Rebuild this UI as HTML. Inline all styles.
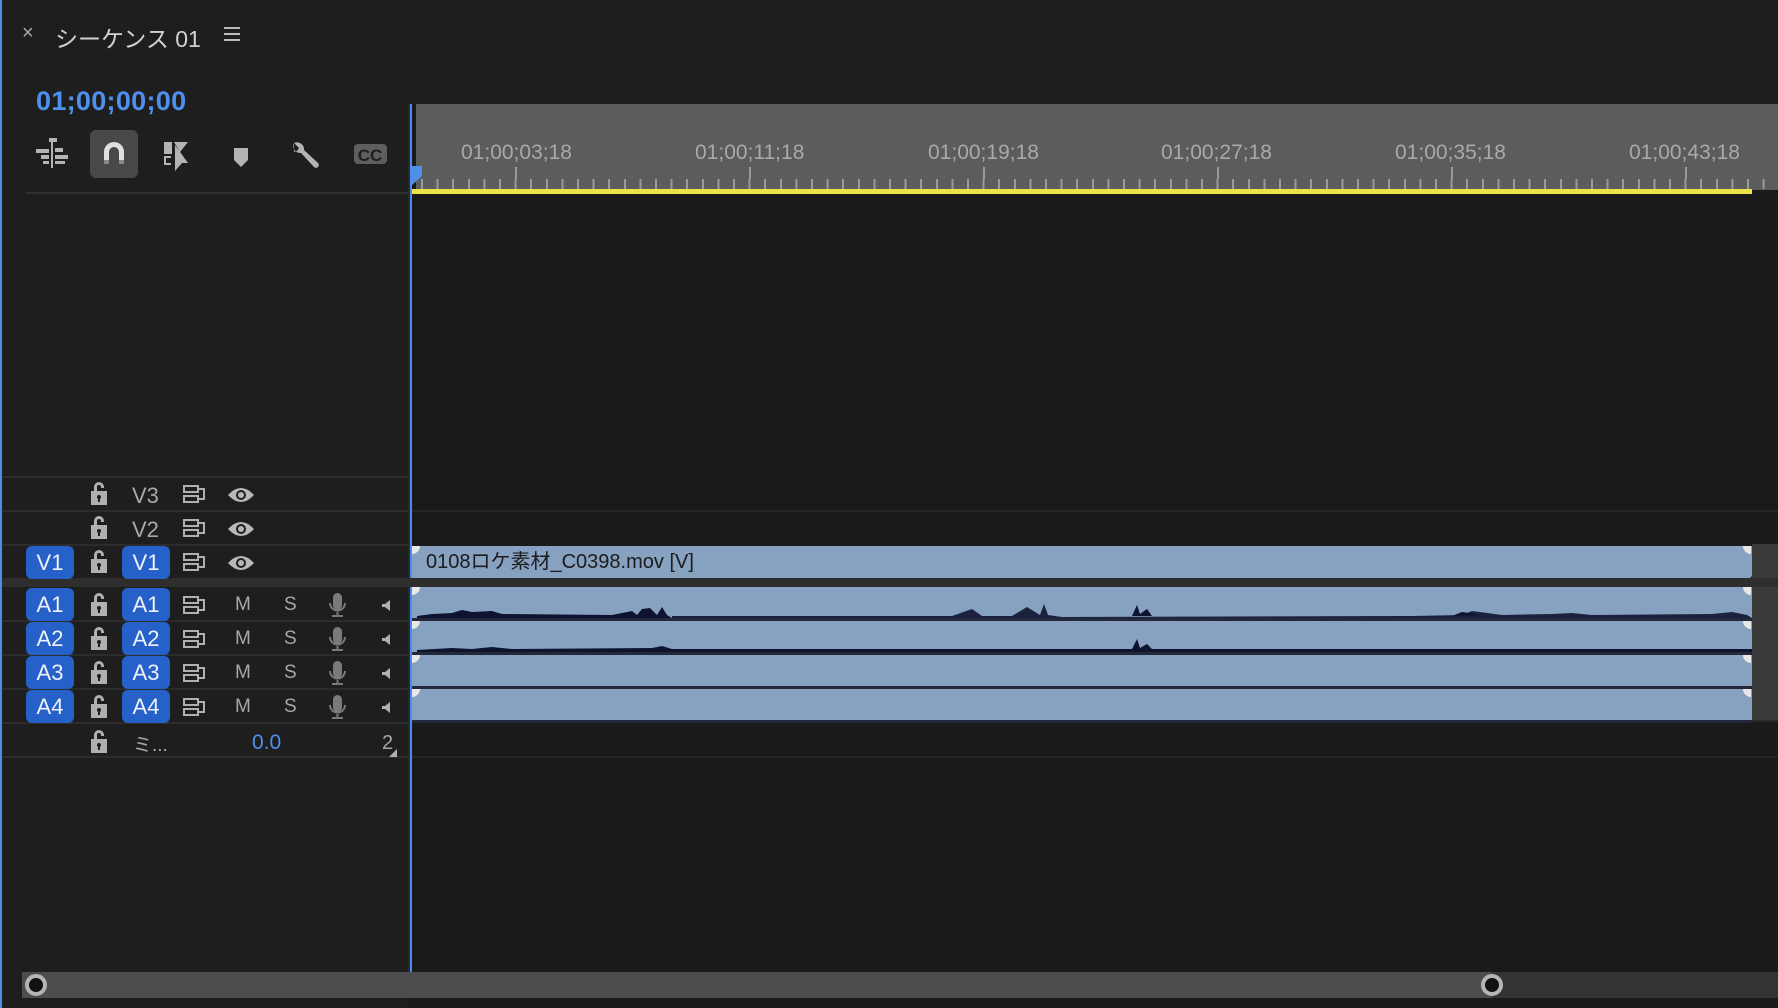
<!DOCTYPE html>
<html><head><meta charset="utf-8"><style>
*{margin:0;padding:0;box-sizing:border-box}
body{width:1778px;height:1008px;background:#1e1e1e;position:relative;overflow:hidden;font-family:"Liberation Sans","Noto Sans CJK JP",sans-serif}
.a{position:absolute}
.row{position:absolute;left:2px;width:406px;border-top:2px solid #2c2c2c}
.badge{position:absolute;width:48px;height:33px;background:#2561c9;border-radius:6px;color:#eef2fa;font-size:22px;text-align:center;line-height:33px}
.lbl{position:absolute;color:#a8a8a8;font-size:22px}
.rl{position:absolute;top:141px;color:#a9a9a9;font-size:21px}
.clip{position:absolute;left:412px;width:1340px;background:#87a1c1;border-bottom:3px solid #23283a;border-radius:0 0 3px 0}
</style></head><body>
<div class="a" style="left:0;top:0;width:2px;height:1008px;background:#4a8df0"></div>
<!-- header -->
<div class="a" style="left:22px;top:22px;color:#aaa;font-size:20px">×</div>
<div class="a" style="left:55px;top:20px;color:#d2d2d2;font-size:23px">シーケンス 01</div>
<div class="a" style="left:224px;top:27px;width:16px;height:2px;background:#bbb;box-shadow:0 6px 0 #bbb,0 12px 0 #bbb"></div>
<div class="a" style="left:36px;top:86px;color:#4e90ec;font-size:27px;font-weight:bold;letter-spacing:0.3px">01;00;00;00</div>
<!-- toolbar -->
<div class="a" style="left:90px;top:130px;width:48px;height:48px;background:#484848;border-radius:6px"></div>
<svg class="a" style="left:0;top:125px" width="410" height="60" fill="#b4b4b4">
<rect x="49" y="13" width="8" height="4"/><rect x="51" y="15" width="2" height="28"/>
<rect x="36" y="24" width="13" height="4"/><rect x="41" y="30" width="8" height="4"/><rect x="55" y="23" width="8" height="4"/><rect x="55" y="30" width="13" height="4"/><rect x="43" y="36" width="6" height="3"/><rect x="55" y="36" width="10" height="3"/>
<path d="M104 38 V27 a10 10 0 0 1 20 0 V38 h-5 V27 a5 5 0 0 0 -10 0 V38z" fill="#e0e0e0"/>
<rect x="104" y="35" width="5" height="4" fill="#888"/><rect x="119" y="35" width="5" height="4" fill="#888"/>
<path d="M164 17 h8 v12 h-8z M174 17 h14 l-8 10 z M175 20 l13 18 h-6 l-7 8z M164 31 h7 v2 h-5 v5 h5 v2 h-7z"/>
<path d="M234 23 h14 v12 l-7 7 l-7 -7z"/>
<path d="M294 18 a7 7 0 0 0 7 10 l13 14 a2 2 0 0 0 4 -4 l-14 -13 a7 7 0 0 0 -10 -7 l5 5 l-2 3 l-3 1z"/>
<rect x="354" y="19" width="33" height="20" rx="4" fill="#5e5e5e"/>
<text x="370" y="36" font-size="17" font-weight="bold" text-anchor="middle" fill="#1e1e1e" font-family="Liberation Sans">CC</text>
</svg>
<div class="a" style="left:26px;top:192px;width:382px;height:2px;background:#2f2f2f"></div>
<!-- timeline area -->
<div class="a" style="left:408px;top:104px;width:1370px;height:904px;background:#1a1a1a"></div>
<div class="a" style="left:408px;top:104px;width:2px;height:868px;background:#2a2a2a"></div>
<div class="a" style="left:416px;top:104px;width:1362px;height:86px;background:#5c5c5c"></div>
<div class="a" style="left:421px;top:179px;width:1357px;height:10px;background:repeating-linear-gradient(90deg,#9a9a9a 0 2px,transparent 2px 15.6px)"></div>
<div class="a" style="left:421px;top:167px;width:1357px;height:12px;background:repeating-linear-gradient(90deg,#9a9a9a 0 2px,transparent 2px 234px);background-position:94px 0"></div>
<div class="rl" style="left:461px">01;00;03;18</div>
<div class="rl" style="left:695px">01;00;11;18</div>
<div class="rl" style="left:928px">01;00;19;18</div>
<div class="rl" style="left:1161px">01;00;27;18</div>
<div class="rl" style="left:1395px">01;00;35;18</div>
<div class="rl" style="left:1629px">01;00;43;18</div>
<div class="a" style="left:412px;top:189px;width:1340px;height:5px;background:#ece34a"></div>
<div class="a" style="left:410px;top:104px;width:2px;height:868px;background:#4a8df0"></div>
<svg class="a" style="left:410px;top:166px" width="14" height="20"><path d="M0 0h12v10l-10 9h-2z" fill="#4f8fe8"/></svg>
<!-- track rows -->
<div class="row" style="top:476px;height:35px"></div>
<div class="row" style="top:510px;height:35px"></div>
<div class="row" style="top:544px;height:35px"></div>
<div class="a" style="left:2px;top:578px;width:1776px;height:9px;background:#2e2e2e"></div>
<div class="row" style="top:620px;height:2px"></div>
<div class="row" style="top:654px;height:2px"></div>
<div class="row" style="top:688px;height:2px"></div>
<div class="row" style="top:722px;height:2px"></div>
<div class="row" style="top:756px;height:2px"></div>
<div class="a" style="left:412px;top:510px;width:1366px;height:2px;background:#262626"></div>
<div class="a" style="left:412px;top:756px;width:1366px;height:2px;background:#262626"></div>
<div class="a" style="left:1752px;top:544px;width:26px;height:34px;background:#3a3a3a"></div>
<div class="a" style="left:1752px;top:587px;width:26px;height:135px;background:#3a3a3a;border-bottom:2px solid #2a2a2a"></div>
<!-- headers -->
<svg class="a" style="left:0;top:476px" width="410" height="285">
<defs>
<g id="lk" fill="#b0b0b0"><path d="M0 9h16v14h-16z"/><path d="M3 9v-4a5 5 0 0 1 10 0v1h-3v-1a2 2 0 0 0 -4 0v4z"/><circle cx="8" cy="15" r="2" fill="#1e1e1e"/><rect x="7" y="15" width="2" height="5" fill="#1e1e1e"/></g>
<g id="tg" fill="none" stroke="#b0b0b0" stroke-width="2"><rect x="1" y="1" width="14" height="6"/><rect x="1" y="11" width="14" height="6"/><path d="M15 4h6v10h-6"/></g>
<g id="ey"><path d="M0 8 q13 -14 26 0 q-13 14 -26 0z" fill="#b8b8b8"/><circle cx="13" cy="8" r="5" fill="#1e1e1e"/><circle cx="13" cy="8" r="3" fill="#b8b8b8"/></g>
<g id="mc" fill="#7a7a7a"><rect x="5" y="0" width="9" height="17" rx="4.5"/><path d="M1 10a8.5 8.5 0 0 0 17 0h-2a6.5 6.5 0 0 1 -13 0z M8.5 18h2v4h-2z M4 22h11v2h-11z"/></g>
<path id="sp" d="M0 4h3l5 -4v11l-5 -4h-3z" fill="#b0b0b0"/>
</defs>
<use href="#lk" x="91" y="6"/><use href="#lk" x="91" y="40"/><use href="#lk" x="91" y="74"/>
<use href="#lk" x="91" y="117"/><use href="#lk" x="91" y="151"/><use href="#lk" x="91" y="185"/><use href="#lk" x="91" y="219"/><use href="#lk" x="91" y="254"/>
<use href="#tg" x="183" y="9"/><use href="#tg" x="183" y="43"/><use href="#tg" x="183" y="77"/>
<use href="#tg" x="183" y="120"/><use href="#tg" x="183" y="154"/><use href="#tg" x="183" y="188"/><use href="#tg" x="183" y="222"/>
<use href="#ey" x="228" y="11"/><use href="#ey" x="228" y="45"/><use href="#ey" x="228" y="79"/>
<use href="#mc" x="328" y="117"/><use href="#mc" x="328" y="151"/><use href="#mc" x="328" y="185"/><use href="#mc" x="328" y="219"/>
<use href="#sp" x="382" y="124"/><use href="#sp" x="382" y="158"/><use href="#sp" x="382" y="192"/><use href="#sp" x="382" y="226"/>
<path d="M397 281v-8l-8 8z" fill="#b0b0b0"/>
</svg>
<div class="lbl" style="left:132px;top:483px">V3</div>
<div class="lbl" style="left:132px;top:517px">V2</div>
<div class="badge" style="left:26px;top:546px">V1</div><div class="badge" style="left:122px;top:546px">V1</div>
<div class="badge" style="left:26px;top:588px">A1</div><div class="badge" style="left:122px;top:588px">A1</div>
<div class="badge" style="left:26px;top:622px">A2</div><div class="badge" style="left:122px;top:622px">A2</div>
<div class="badge" style="left:26px;top:656px">A3</div><div class="badge" style="left:122px;top:656px">A3</div>
<div class="badge" style="left:26px;top:690px">A4</div><div class="badge" style="left:122px;top:690px">A4</div>
<div class="lbl" style="left:235px;top:594px;font-size:19px">M</div><div class="lbl" style="left:284px;top:594px;font-size:19px">S</div>
<div class="lbl" style="left:235px;top:628px;font-size:19px">M</div><div class="lbl" style="left:284px;top:628px;font-size:19px">S</div>
<div class="lbl" style="left:235px;top:662px;font-size:19px">M</div><div class="lbl" style="left:284px;top:662px;font-size:19px">S</div>
<div class="lbl" style="left:235px;top:696px;font-size:19px">M</div><div class="lbl" style="left:284px;top:696px;font-size:19px">S</div>
<div class="lbl" style="left:133px;top:730px;font-size:19px">ミ...</div>
<div class="a" style="left:252px;top:731px;color:#4e90ec;font-size:21px">0.0</div>
<div class="lbl" style="left:382px;top:732px;font-size:20px">2</div>
<!-- clips -->
<div class="clip" style="top:546px;height:32px;border-bottom:none"></div>
<div class="a" style="left:426px;top:549px;color:#1c1c1c;font-size:20px;line-height:26px">0108ロケ素材_C0398.mov [V]</div>
<div class="clip" style="top:587px;height:34px"></div>
<div class="clip" style="top:621px;height:34px"></div>
<div class="clip" style="top:655px;height:34px"></div>
<div class="clip" style="top:689px;height:34px"></div>
<svg class="a" style="left:412px;top:587px" width="1340" height="135" fill="#0e1430">
<path d="M5 29 L20 27 L40 26 L50 23 L60 25 L80 24 L90 27 L200 28 L220 24 L225 28 L230 22 L238 21 L245 28 L250 20 L255 28 L260 31 L5 31z"/>
<path d="M260 29 H540 L560 22 L570 29 H600 L615 20 L628 28 L632 17 L636 28 L650 30 L1000 29 L1050 28 L1060 24 L1075 26 L1090 28 L1140 27 L1160 26 L1180 28 L1300 27 L1320 25 L1335 28 L1340 31 H260z" opacity="0.9"/>
<path d="M720 29 L725 18 L728 27 L735 22 L740 29z M1040 29 L1050 25 L1070 28z"/>
<path d="M5 63 L40 61 L60 62 L80 60 L100 62 L240 61 L250 59 L260 62 H720 L725 52 L728 61 L735 57 L740 62 H1340 V65 H5z"/>
</svg>
<svg class="a" style="left:412px;top:546px" width="1340" height="180" fill="#e8e8e8">
<path d="M0 0h8a8 8 0 0 1 -8 8z"/><path d="M0 41h8a8 8 0 0 1 -8 8z"/><path d="M0 75h8a8 8 0 0 1 -8 8z"/><path d="M0 109h8a8 8 0 0 1 -8 8z"/><path d="M0 143h8a8 8 0 0 1 -8 8z"/>
<path d="M1339 0h-8a8 8 0 0 0 8 8z"/><path d="M1339 41h-8a8 8 0 0 0 8 8z"/><path d="M1339 75h-8a8 8 0 0 0 8 8z"/><path d="M1339 109h-8a8 8 0 0 0 8 8z"/><path d="M1339 143h-8a8 8 0 0 0 8 8z"/>
</svg>
<!-- scrollbar -->
<div class="a" style="left:22px;top:972px;width:1756px;height:26px;background:#333"></div>
<div class="a" style="left:22px;top:972px;width:1470px;height:26px;background:#4d4d4d"></div>
<div class="a" style="left:25px;top:974px;width:22px;height:22px;border-radius:50%;border:4px solid #b5b5b5;background:#111"></div>
<div class="a" style="left:1481px;top:974px;width:22px;height:22px;border-radius:50%;border:4px solid #b5b5b5;background:#111"></div>
</body></html>
